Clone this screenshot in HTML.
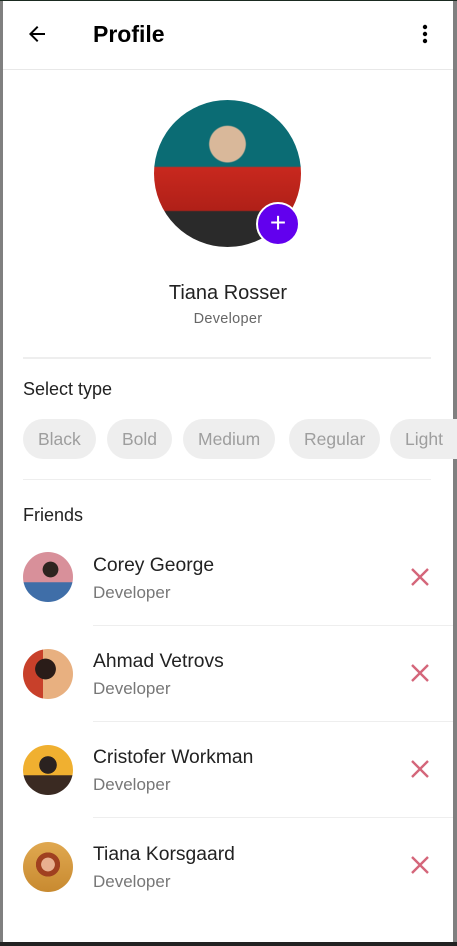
<!DOCTYPE html>
<html><head><style>
*{margin:0;padding:0;box-sizing:border-box}
body{width:457px;height:946px;background:#808080;font-family:"Liberation Sans",Roboto,sans-serif;position:relative;overflow:hidden}
.page{position:absolute;left:3px;top:1px;width:450px;height:941px;background:#fff}
.t{position:absolute;white-space:nowrap}
.chip{position:absolute;top:418px;height:40px;border-radius:20px;background:#eee;color:#9e9e9e;font-size:17.5px;line-height:40px;padding:0 15px}
.av{position:absolute;left:20px;width:50px;height:50px;border-radius:50%}
.x{position:absolute;left:405px}
.name{position:absolute;left:90px;font-size:19.3px;color:#222}
.role{position:absolute;left:90px;font-size:17px;color:#777}
</style></head><body>
<div style="position:absolute;left:0;top:0;width:457px;height:1px;background:#1a2a20"></div>
<div style="position:absolute;left:0;top:942px;width:457px;height:4px;background:#222"></div>
<div class="page">
<svg class="t" style="left:22px;top:21px" width="24" height="24" viewBox="0 0 24 24"><path d="M20 11H7.8l5.6-5.6L12 4l-8 8 8 8 1.4-1.4L7.8 13H20z" fill="#000"/></svg>
<div class="t" style="left:90px;top:20px;font-size:23px;font-weight:bold;color:#000">Profile</div>
<svg class="t" style="left:410px;top:21px" width="24" height="24" viewBox="0 0 24 24"><circle cx="12" cy="5" r="2.2"/><circle cx="12" cy="12" r="2.2"/><circle cx="12" cy="19" r="2.2"/></svg>
<div style="position:absolute;left:0;top:68px;width:450px;height:1px;background:#e8e8e8"></div>
<div style="position:absolute;left:151px;top:99px;width:147px;height:147px;border-radius:50%;background:radial-gradient(circle at 50% 30%,#d9b89a 0 14%,transparent 15%),linear-gradient(180deg,#0b6c74 0,#0b6c74 45%,#c8281e 46%,#b02018 75%,#2a2a2a 76%);overflow:hidden"></div>
<div style="position:absolute;left:253px;top:201px;width:44px;height:44px;border-radius:50%;background:#6200ee;border:2px solid #fff;color:#fff;font-size:28px;line-height:38px;text-align:center">+</div>
<div class="t" style="left:0;width:450px;text-align:center;top:281px;font-size:20px;color:#222">Tiana Rosser</div>
<div class="t" style="left:0;width:450px;text-align:center;top:310px;font-size:14.5px;color:#666;letter-spacing:.3px">Developer</div>
<div style="position:absolute;left:20px;top:356px;width:408px;height:2px;background:#eee"></div>
<div class="t" style="left:20px;top:378px;font-size:18px;color:#222">Select type</div>
<div class="chip" style="left:20px">Black</div>
<div class="chip" style="left:104px">Bold</div>
<div class="chip" style="left:180px">Medium</div>
<div class="chip" style="left:286px">Regular</div>
<div class="chip" style="left:387px;border-radius:20px 0 0 20px">Light</div>
<div style="position:absolute;left:20px;top:478px;width:408px;height:1px;background:#eee"></div>
<div class="t" style="left:20px;top:504px;font-size:18px;color:#222">Friends</div>

<div class="av" style="top:551px;background:radial-gradient(circle at 55% 35%,#2e2420 0 18%,transparent 19%),linear-gradient(180deg,#d8909a 0 60%,#3f6ea8 61%)"></div>
<div class="name" style="top:554px">Corey George</div><div class="role" style="top:582px">Developer</div>
<div style="position:absolute;left:90px;top:624px;width:360px;height:1px;background:#eee"></div>
<div class="av" style="top:648px;background:radial-gradient(circle at 45% 40%,#2a1c18 0 25%,transparent 26%),linear-gradient(90deg,#c8402a 0 40%,#e8b080 40%)"></div>
<div class="name" style="top:650px">Ahmad Vetrovs</div><div class="role" style="top:678px">Developer</div>
<div style="position:absolute;left:90px;top:720px;width:360px;height:1px;background:#eee"></div>
<div class="av" style="top:744px;background:radial-gradient(circle at 50% 40%,#2a2220 0 22%,transparent 23%),linear-gradient(180deg,#f0b030 0 60%,#3a2a22 61%)"></div>
<div class="name" style="top:746px">Cristofer Workman</div><div class="role" style="top:774px">Developer</div>
<div style="position:absolute;left:90px;top:816px;width:360px;height:1px;background:#eee"></div>
<div class="av" style="top:841px;background:radial-gradient(circle at 50% 45%,#e8b090 0 18%,#a04020 19% 32%,transparent 33%),linear-gradient(180deg,#e0a850,#c88a30)"></div>
<div class="name" style="top:843px">Tiana Korsgaard</div><div class="role" style="top:871px">Developer</div>

<svg class="x" style="top:564px" width="24" height="24" viewBox="0 0 24 24"><path d="M4 4L20 20M20 4L4 20" stroke="#d4667a" stroke-width="2.4"/></svg>
<svg class="x" style="top:660px" width="24" height="24" viewBox="0 0 24 24"><path d="M4 4L20 20M20 4L4 20" stroke="#d4667a" stroke-width="2.4"/></svg>
<svg class="x" style="top:756px" width="24" height="24" viewBox="0 0 24 24"><path d="M4 4L20 20M20 4L4 20" stroke="#d4667a" stroke-width="2.4"/></svg>
<svg class="x" style="top:852px" width="24" height="24" viewBox="0 0 24 24"><path d="M4 4L20 20M20 4L4 20" stroke="#d4667a" stroke-width="2.4"/></svg>
</div>
</body></html>
